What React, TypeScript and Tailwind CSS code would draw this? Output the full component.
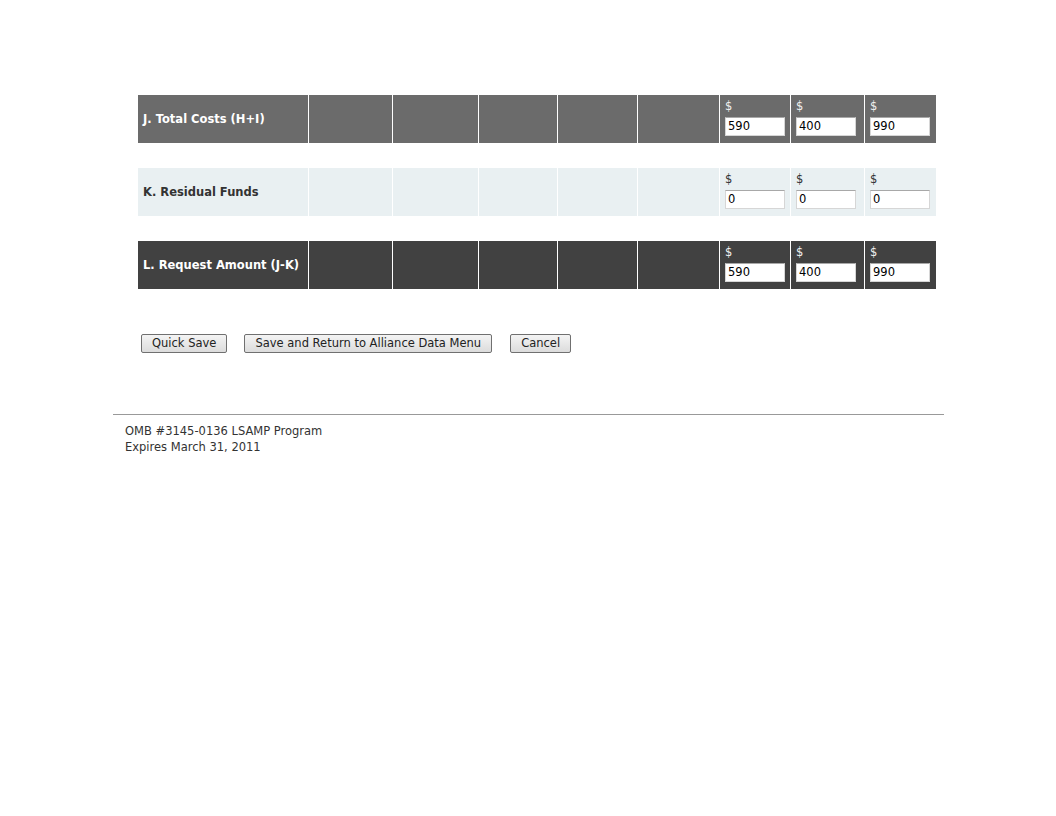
const widths = [170, 84, 86, 79, 80, 82, 71, 74, 72];

const rows = [
  { label: 'J. Total Costs (H+I)', values: ['590', '400', '990'], bg: 'bg-[#6b6b6b]', text: 'text-white', dollar: 'text-[#f0f0f0]' },
  { label: 'K. Residual Funds', values: ['0', '0', '0'], bg: 'bg-[#e9f0f2]', text: 'text-[#333333]', dollar: 'text-[#333333]' },
  { label: 'L. Request Amount (J-K)', values: ['590', '400', '990'], bg: 'bg-[#414141]', text: 'text-white', dollar: 'text-[#f0f0f0]' },
];

function Row({ row }: { row: (typeof rows)[number] }) {
  return (
    <div className={`flex h-[48px] ${row.bg}`}>
      <div style={{ width: widths[0] }} className={`flex items-center pl-[5px] pt-[1px] text-[11.5px] font-bold ${row.text}`}>
        {row.label}
      </div>
      {widths.slice(1, 6).map((w, i) => (
        <div key={i} style={{ width: w }} className="border-l border-white" />
      ))}
      {row.values.map((v, i) => (
        <div key={i} style={{ width: widths[6 + i] }} className="border-l border-white pl-[5px] pt-[4px]">
          <div className={`text-[11.5px] leading-[14px] ${row.dollar}`}>$</div>
          <input
            readOnly
            value={v}
            className="h-[19px] w-[60px] border border-[#d6d6d6] border-t-[#a8a8a8] bg-white px-[2px] text-[11.5px] text-black outline-none"
          />
        </div>
      ))}
    </div>
  );
}

function Btn({ children }: { children: string }) {
  return (
    <button className="h-[19px] rounded-[2px] border border-[#707070] bg-gradient-to-b from-[#f4f4f4] to-[#dcdcdc] px-[10px] text-[11.5px] leading-[17px] text-[#222]">
      {children}
    </button>
  );
}

export default function App() {
  return (
    <div className="min-h-[816px] bg-white font-['DejaVu_Sans',Verdana,sans-serif]">
      <div className="ml-[138px] w-[798px] pt-[95px]">
        <div className="flex flex-col gap-[25px]">
          {rows.map((r) => (
            <Row key={r.label} row={r} />
          ))}
        </div>
        <div className="mt-[45px] flex items-center pl-[3px]">
          <Btn>Quick Save</Btn>
          <div className="w-[17px]" />
          <Btn>Save and Return to Alliance Data Menu</Btn>
          <div className="w-[18px]" />
          <Btn>Cancel</Btn>
        </div>
      </div>
      <div className="ml-[113px] mt-[61px] w-[831px] border-t border-[#999999] pl-[12px] pt-[8px] text-[11.5px] leading-[16px] text-[#333333]">
        <div>OMB #3145-0136 LSAMP Program</div>
        <div>Expires March 31, 2011</div>
      </div>
    </div>
  );
}
